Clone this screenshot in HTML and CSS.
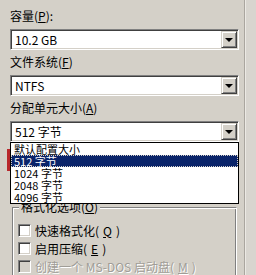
FILE: index.html
```html
<!DOCTYPE html>
<html lang="zh-CN">
<head>
  <meta charset="UTF-8">
  <title>格式化</title>
  <link rel="stylesheet" href="styles.css">
</head>
<body>
  <div class="window">
    <div class="dialog">
      <div class="label">容量(<u>P</u>):</div>
      <div class="combo">
        <span class="value">10.2 GB</span>
        <span class="btn"><span class="arrow"></span></span>
      </div>

      <div class="label">文件系统(<u>F</u>)</div>
      <div class="combo">
        <span class="value">NTFS</span>
        <span class="btn"><span class="arrow"></span></span>
      </div>

      <div class="label">分配单元大小(<u>A</u>)</div>
      <div class="combo open">
        <span class="value">512 字节</span>
        <span class="btn"><span class="arrow"></span></span>
        <!-- open drop-down list -->
        <ul class="list">
          <li>默认配置大小</li>
          <li class="selected">512 字节</li>
          <li>1024 字节</li>
          <li>2048 字节</li>
          <li>4096 字节</li>
        </ul>
      </div>

      <div class="group">
        <span class="group-title">格式化选项(<u>O</u>)</span>
        <label class="check"><span class="box"></span>快速格式化(<u>Q</u>)</label>
        <label class="check"><span class="box"></span>启用压缩(<u>E</u>)</label>
        <label class="check disabled"><span class="box"></span>创建一个 MS-DOS 启动盘(<u>M</u>)</label>
      </div>
    </div>
    <div class="side"></div>
  </div>
  <div class="mark"></div>
</body>
</html>
```

FILE: styles.css
```css
body {
  margin: 0;
  width: 256px;
  height: 275px;
  overflow: hidden;
  background-color: #d4d0c8;
  font-family: "Noto Sans CJK SC", "Liberation Sans", sans-serif;
  font-size: 12px;
  color: #000;
}
.window {
  display: flex;
  height: 275px;
}
.dialog {
  flex: 0 0 234px;
  padding: 9px 0 0 10px;
}
.side {
  flex: 1;
  border-left: 1px solid #aaa69f;
  box-shadow: inset 1px 0 #ece9e4;
  background-color: #d8d5cf;
}
.label {
  height: 14px;
  line-height: 14px;
  margin-top: 5px;
  white-space: nowrap;
}
.label:first-child {
  margin-top: 0;
}
.combo {
  position: relative;
  display: flex;
  width: 229px;
  height: 21px;
  margin-top: 6px;
  box-sizing: border-box;
  background-color: #fff;
  border: 1px solid;
  border-color: #808080 #fff #fff #808080;
  box-shadow: inset 1px 1px #404040, inset -1px -1px #d4d0c8;
  padding: 1px;
}
.value {
  flex: 1;
  padding-left: 3px;
  line-height: 17px;
  white-space: nowrap;
}
.btn {
  flex: 0 0 16px;
  height: 17px;
  box-sizing: border-box;
  background-color: #d4d0c8;
  border: 1px solid;
  border-color: #d4d0c8 #404040 #404040 #d4d0c8;
  box-shadow: inset 1px 1px #fff, inset -1px -1px #808080;
  display: flex;
  align-items: center;
  justify-content: center;
}
.arrow {
  width: 0;
  height: 0;
  border-left: 4px solid transparent;
  border-right: 4px solid transparent;
  border-top: 4px solid #000;
  margin-top: 1px;
}
.list {
  position: absolute;
  top: 20px;
  left: -1px;
  width: 229px;
  margin: 0;
  padding: 0;
  list-style: none;
  box-sizing: border-box;
  background-color: #fff;
  border: 1px solid #000;
  z-index: 2;
}
.list li {
  height: 12px;
  line-height: 12px;
  padding-left: 3px;
  font-size: 11px;
  white-space: nowrap;
}
.list li.selected {
  background-color: #0a246a;
  color: #fff;
  outline: 1px dotted #d4d0c8;
  outline-offset: -1px;
}
.group {
  position: relative;
  width: 225px;
  height: 80px;
  margin: 65px 0 0 2px;
  box-sizing: border-box;
  border: 1px solid;
  border-color: #808080 #fff #fff #808080;
  box-shadow: inset 1px 1px #fff, inset -1px -1px #808080;
  padding: 13px 0 0 5px;
}
.group-title {
  position: absolute;
  top: -7px;
  left: 6px;
  padding: 0 2px;
  line-height: 12px;
  background-color: #d4d0c8;
}
.check {
  display: flex;
  align-items: center;
  gap: 4px;
  height: 18px;
  white-space: nowrap;
}
.box {
  width: 13px;
  height: 13px;
  box-sizing: border-box;
  background-color: #fff;
  border: 1px solid;
  border-color: #808080 #fff #fff #808080;
  box-shadow: inset 1px 1px #404040, inset -1px -1px #d4d0c8;
}
.check.disabled {
  color: #a09d97;
  text-shadow: 1px 1px #fff;
}
.check.disabled .box {
  background-color: #d4d0c8;
}
.mark {
  position: absolute;
  left: 7px;
  top: 149px;
  width: 76px;
  height: 22px;
  box-sizing: border-box;
  border: 3px solid #b8282c;
}
```
